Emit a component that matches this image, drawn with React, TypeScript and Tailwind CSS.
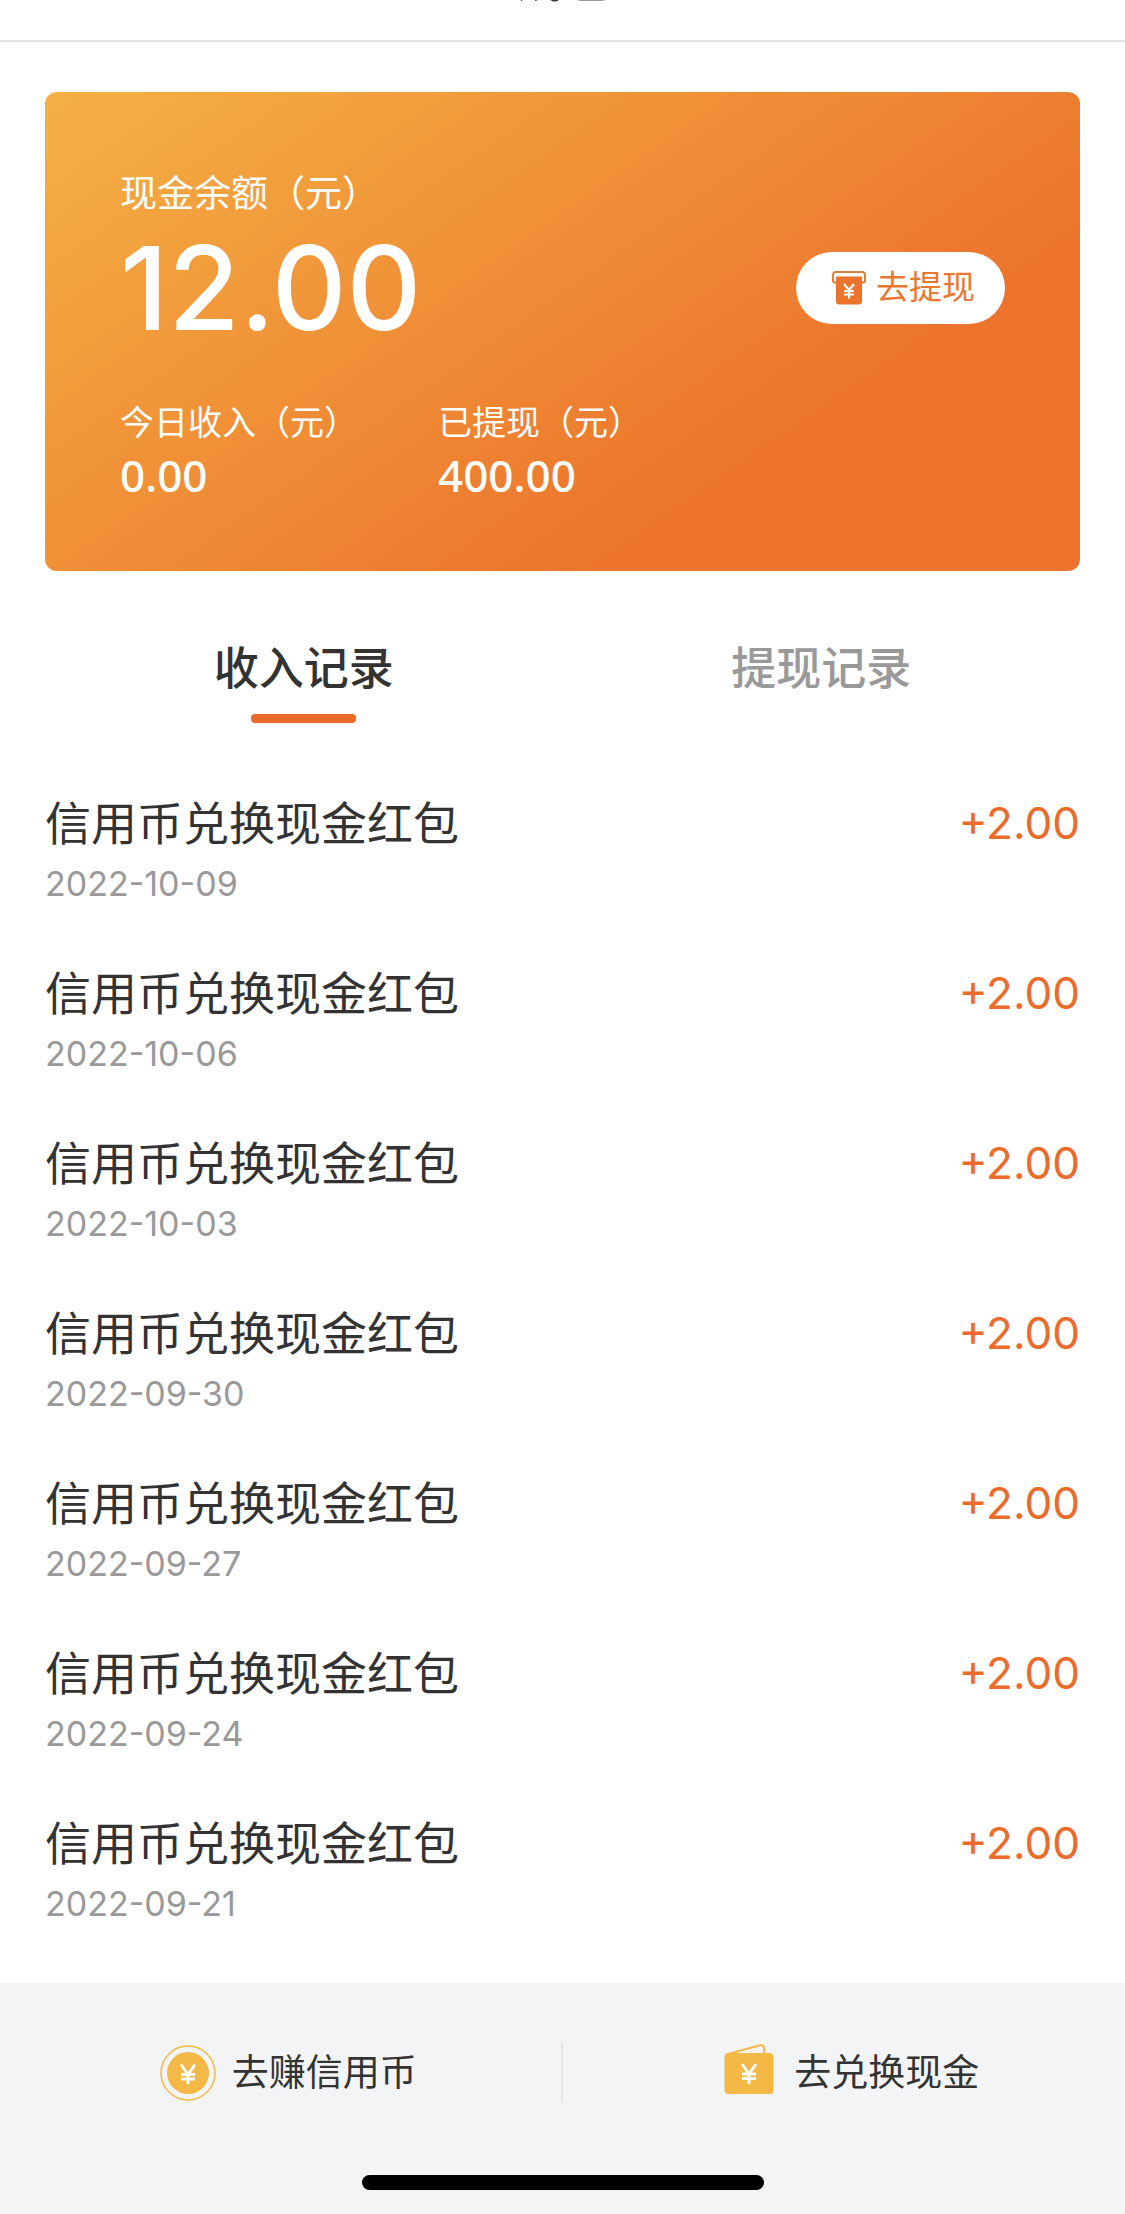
import React from "react";

const records = [
  { date: "2022-10-09", amount: "+2.00" },
  { date: "2022-10-06", amount: "+2.00" },
  { date: "2022-10-03", amount: "+2.00" },
  { date: "2022-09-30", amount: "+2.00" },
  { date: "2022-09-27", amount: "+2.00" },
  { date: "2022-09-24", amount: "+2.00" },
  { date: "2022-09-21", amount: "+2.00" },
];

function WithdrawIcon() {
  return (
    <svg width="34" height="34" viewBox="0 0 34 34" fill="none" aria-hidden="true">
      <path d="M5 11.500H3a2 2 0 0 1-2-2V4a3 3 0 0 1 3-3h26a3 3 0 0 1 3 3v5.500a2 2 0 0 1-2 2h-2" stroke="#d9823f" strokeWidth="2" />
      <path d="M4 5.500h26v25a3 3 0 0 1-3 3H7a3 3 0 0 1-3-3z" fill="#ec732b" />
      <path d="M12 13l5 6 5-6M17 19v8.500M12 20h10M12 23.500h10" stroke="#fff" strokeWidth="2.200" />
    </svg>
  );
}

function CoinIcon() {
  return (
    <svg width="56" height="56" viewBox="0 0 56 56" fill="none" aria-hidden="true">
      <circle cx="28" cy="28" r="27" stroke="#f4b846" strokeWidth="1.500" />
      <circle cx="28" cy="28" r="21" fill="#f4b846" />
      <path d="M21 19.500l7 10 7-10M28 29v10M21 29.500h14M21 34h14" stroke="#fff" strokeWidth="2.800" />
    </svg>
  );
}

function WalletIcon() {
  return (
    <svg width="50" height="58" viewBox="0 0 50 58" fill="none" aria-hidden="true">
      <path d="M4 10L36 1.200a3 3 0 0 1 4 3V11" stroke="#f4b846" strokeWidth="2" />
      <rect x="0.500" y="9" width="49" height="41" rx="4" fill="#f4b846" />
      <path d="M18 20l7 10 7-10M25 30v10M18 30h14M18 34.500h14" stroke="#fff" strokeWidth="2.800" />
    </svg>
  );
}

export default function App() {
  return (
    <div className="flex min-h-screen flex-col bg-white font-['Inter','Noto_Sans_CJK_SC',sans-serif] text-[#333]">
      {/* Title bar */}
      <header className="flex h-[42px] items-end justify-center overflow-hidden border-b-2 border-[#e5e5e5] pb-[31px]">
        <h1 className="text-[51px] leading-[60px] font-medium">钱包</h1>
      </header>

      <main className="flex-1 px-[45px] pt-[50px]">
        {/* Balance card */}
        <section className="rounded-xl bg-linear-[145deg,#f4b144_0%,#ec742c_72%] px-[75px] pt-[78px] pb-[66px] text-white">
          <p className="text-[37px] leading-[48px]">现金余额（元）</p>
          <div className="flex items-center justify-between">
            <p className="text-[116px] leading-[140px] font-medium">12.00</p>
            <button className="flex h-[72px] items-center gap-2.5 rounded-full bg-white pr-[30px] pl-9 text-[33px] text-[#e8782f]">
              <WithdrawIcon />
              去提现
            </button>
          </div>
          <dl className="mt-[43px] flex gap-20">
            <div>
              <dt className="text-[34px] leading-[44px]">今日收入（元）</dt>
              <dd className="font-['Noto_Sans',sans-serif] text-[44px] leading-[60px] font-medium">0.00</dd>
            </div>
            <div>
              <dt className="text-[34px] leading-[44px]">已提现（元）</dt>
              <dd className="font-['Noto_Sans',sans-serif] text-[44px] leading-[60px] font-medium">400.00</dd>
            </div>
          </dl>
        </section>

        {/* Tabs */}
        <div role="tablist" className="mt-[66px] grid grid-cols-2 text-[45px] leading-[64px] font-medium">
          <button role="tab" aria-selected="true" className="flex flex-col items-center gap-[13px]">
            收入记录
            <span className="h-[9px] w-[105px] rounded bg-[#ee6a2a]" />
          </button>
          <button role="tab" aria-selected="false" className="flex flex-col items-center text-[#999]">
            提现记录
          </button>
        </div>

        {/* Income records */}
        <ul className="mt-[66px]">
          {records.map((record) => (
            <li key={record.date} className="h-[170px]">
              <div className="flex items-center justify-between leading-[68px]">
                <span className="text-[46px]">信用币兑换现金红包</span>
                <span className="text-[44px] text-[#ec6a2a]">{record.amount}</span>
              </div>
              <p className="text-[34px] leading-[54px] text-[#999]">{record.date}</p>
            </li>
          ))}
        </ul>
      </main>

      {/* Bottom actions */}
      <footer className="bg-[#f3f4f6] pt-[60px] pb-6">
        <nav className="grid grid-cols-2 divide-x-2 divide-[#e3e4e6] text-[37px] leading-[60px]">
          <a href="#earn" className="flex items-center justify-center gap-4 pl-4">
            <CoinIcon />
            去赚信用币
          </a>
          <a href="#exchange" className="flex items-center justify-center gap-5 pl-4">
            <WalletIcon />
            去兑换现金
          </a>
        </nav>
        <div className="mx-auto mt-[72px] h-[15px] w-[402px] rounded-full bg-black" />
      </footer>
    </div>
  );
}
